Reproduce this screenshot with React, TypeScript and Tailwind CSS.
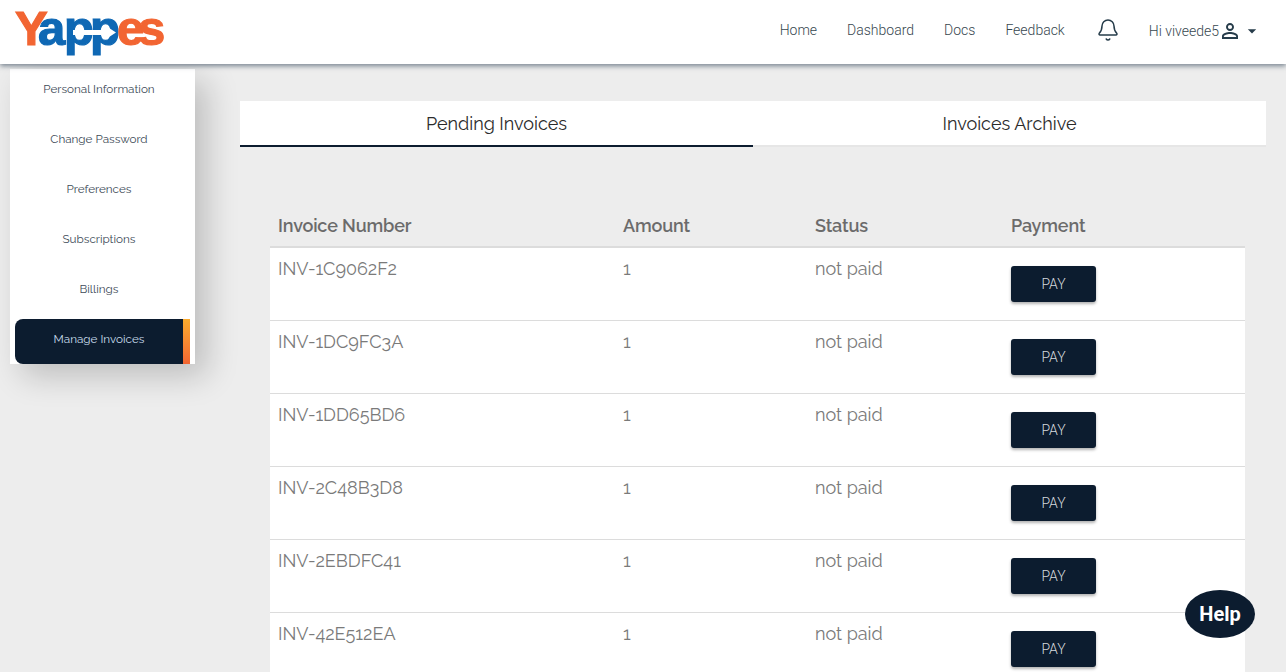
import { Bell } from "lucide-react";
import { MdArrowDropDown, MdPersonOutline } from "react-icons/md";

const sideItems = [
  "Personal Information",
  "Change Password",
  "Preferences",
  "Subscriptions",
  "Billings",
];

const invoices = [
  "INV-1C9062F2",
  "INV-1DC9FC3A",
  "INV-1DD65BD6",
  "INV-2C48B3D8",
  "INV-2EBDFC41",
  "INV-42E512EA",
];

const raleway = "font-['Raleway','Lato','Open_Sans',sans-serif]";

function Logo() {
  return (
    <svg width="152" height="54" viewBox="0 0 152 54" className="ml-[14px] overflow-visible">
      <text y="40" fontFamily="Liberation Sans, sans-serif" fontWeight="700" fontSize="49" strokeWidth="1.2">
        <tspan x="1" fill="#f26532" stroke="#f26532">Y</tspan>
        <tspan x="24 50 76" fill="#0f68b4" stroke="#0f68b4">app</tspan>
        <tspan x="103 124" fill="#f26532" stroke="#f26532">es</tspan>
      </text>
      <polygon points="59,25 92,25 92,21 102,27.5 92,34 92,30 59,30" fill="#fff" />
    </svg>
  );
}

function Header() {
  return (
    <header className="relative z-20 flex h-16 shrink-0 items-center justify-between bg-white shadow-[0_2px_5px_rgba(40,60,80,0.6)]">
      <Logo />
      <nav className="mr-6 mb-[2px] flex items-center font-['Roboto',sans-serif] text-sm font-light text-[#37474f]">
        <a className="mb-[2px] mr-[30px]">Home</a>
        <a className="mb-[2px] mr-[30px]">Dashboard</a>
        <a className="mb-[2px] mr-[30px]">Docs</a>
        <a className="mb-[2px] mr-[31px]">Feedback</a>
        <Bell size={24} strokeWidth={1.5} className="mb-[3px] mr-[28px] text-[#263c4a]" />
        <span className="pl-px">Hi viveede5</span>
        <MdPersonOutline size={24} className="-ml-px text-[#263c4a]" />
        <MdArrowDropDown size={20} className="text-[#263c4a]" />
      </nav>
    </header>
  );
}

function Sidebar() {
  return (
    <aside className={`ml-[10px] mt-[5px] h-[295px] w-[185px] shrink-0 bg-white shadow-[12px_12px_30px_rgba(0,0,0,0.2)] ${raleway}`}>
      {sideItems.map((item) => (
        <div key={item} className="flex h-[50px] items-center justify-center pb-2 pr-[7px] text-[11.7px] text-[#3d4a57]">
          {item}
        </div>
      ))}
      <div className="mx-[5px] flex h-[45px] overflow-hidden rounded-l-lg bg-[#0c1c2f]">
        <div className="flex flex-1 items-center justify-center pb-1 text-[11.7px] text-[#c8dcec]">
          Manage Invoices
        </div>
        <div className="w-[7px] bg-gradient-to-b from-[#fbab2d] to-[#f26532]" />
      </div>
    </aside>
  );
}

function Tabs() {
  return (
    <div className={`flex h-[46px] bg-white text-lg text-[#2b2b2b] ${raleway}`}>
      <div className="flex w-1/2 items-center justify-center border-b-2 border-[#0c1c2f] pt-[2px]">Pending Invoices</div>
      <div className="flex w-1/2 items-center justify-center border-b-2 border-[#e6e6e6] pt-[2px]">Invoices Archive</div>
    </div>
  );
}

function InvoiceTable() {
  return (
    <div className={`ml-[30px] mr-[21px] mt-[58px] ${raleway}`}>
      <div className="grid h-[43px] grid-cols-[345px_192px_196px_1fr] items-center border-b-2 border-[#dcdcdc] pl-2 text-lg font-semibold tracking-[-0.15px] text-[#6b6b6b]">
        <span>Invoice Number</span>
        <span>Amount</span>
        <span>Status</span>
        <span>Payment</span>
      </div>
      {invoices.map((inv) => (
        <div key={inv} className="grid h-[73px] grid-cols-[345px_192px_196px_1fr] border-b border-[#dcdcdc] bg-white pl-2 text-lg text-[#7a7a7a]">
          <span className="mt-[7px]">{inv}</span>
          <span className="mt-[7px]">1</span>
          <span className="mt-[7px]">not paid</span>
          <div className="pt-[18px]">
            <button className="flex h-9 w-[85px] items-center justify-center rounded-[3px] bg-[#0c1c2f] font-['Roboto',sans-serif] text-sm font-light text-[#d5d8dc] shadow-[0_2px_3px_rgba(0,0,0,0.3)]">
              PAY
            </button>
          </div>
        </div>
      ))}
    </div>
  );
}

export default function App() {
  return (
    <div className="relative flex h-screen flex-col overflow-hidden bg-[#ededed]">
      <Header />
      <div className="flex flex-1 items-start">
        <Sidebar />
        <main className="ml-[45px] mr-5 mt-[37px] flex-1">
          <Tabs />
          <InvoiceTable />
        </main>
      </div>
      <div className="absolute left-[1185px] top-[590px] z-30 flex h-12 w-[70px] items-center justify-center rounded-[50%] bg-[#0c1c2f] font-['Roboto',sans-serif] text-xl font-bold text-white">
        Help
      </div>
    </div>
  );
}
